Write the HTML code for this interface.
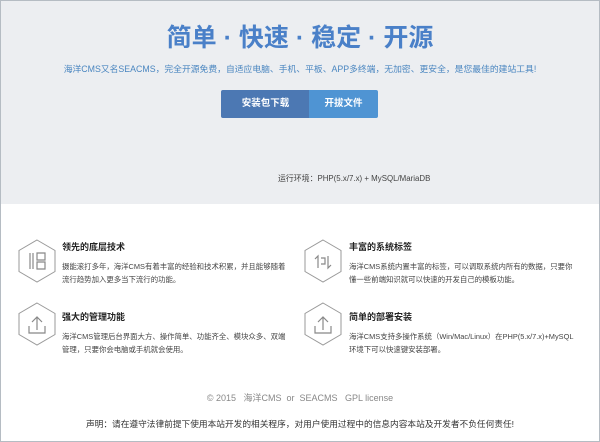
<!DOCTYPE html>
<html><head><meta charset="utf-8"><style>
*{margin:0;padding:0;box-sizing:border-box}
body{width:600px;height:442px;overflow:hidden;font-family:"Liberation Sans","Noto Sans CJK SC",sans-serif;background:#fff;position:relative}
.frame{position:absolute;inset:0;border:1px solid #b5bcc3;pointer-events:none;z-index:5}
.top{position:absolute;left:0;top:0;width:600px;height:204px;background:#eceef1}
.t{position:absolute;left:0;width:600px;text-align:center;white-space:nowrap}
.sub{top:62px;font-size:8.8px;color:#4a86c0}
.b1{position:absolute;left:221px;top:90px;width:89px;height:28px;background:#4c78b3;color:#fff;font-size:9.5px;font-weight:bold;text-align:center;line-height:28px;border-radius:2px 0 0 2px}
.b2{position:absolute;left:309px;top:90px;width:69px;height:28px;background:#4f94d3;color:#fff;font-size:9.5px;font-weight:bold;text-align:center;line-height:28px;border-radius:0 2px 2px 0}
.env{position:absolute;left:278px;top:173px;font-size:7.9px;color:#444;white-space:nowrap}
.f{position:absolute;font-size:7.4px;color:#444;line-height:13px;width:228px}
.f b{display:block;font-size:9px;color:#222;margin-bottom:7px;line-height:12px}
svg{position:absolute}
.foot{font-size:9px;color:#888;top:391px}
.disc{font-size:8.7px;color:#333;top:417px}
</style></head><body>
<div class="top"></div>
<div class="t" style="top:23px;font-size:25px;line-height:30px;color:#4a80c8;font-weight:bold">简单 · 快速 · 稳定 · 开源</div>
<div class="t sub">海洋CMS又名SEACMS，完全开源免费，自适应电脑、手机、平板、APP多终端，无加密、更安全，是您最佳的建站工具!</div>
<div class="b1">安装包下载</div><div class="b2">开拔文件</div>
<div class="env">运行环境：PHP(5.x/7.x) + MySQL/MariaDB</div>

<svg style="left:17px;top:239px" width="40" height="44" viewBox="0 0 40 44"><polygon points="20,1 38,11.5 38,32.5 20,43 2,32.5 2,11.5" fill="none" stroke="#999" stroke-width="1"/><path d="M13 14v16M16 14v16M20 14h8v7h-8zM20 23h8v7h-8z" fill="none" stroke="#888" stroke-width="1.2"/></svg>
<div class="f" style="left:62px;top:241px"><b>领先的底层技术</b>摄能滚打多年，海洋CMS有着丰富的经验和技术积累，并且能够随着流行趋势加入更多当下流行的功能。</div>

<svg style="left:303px;top:239px" width="40" height="44" viewBox="0 0 40 44"><polygon points="20,1 38,11.5 38,32.5 20,43 2,32.5 2,11.5" fill="none" stroke="#999" stroke-width="1"/><path d="M12 20l3-3v12M28 26l-3 3V17M18 19h4v6h-4" fill="none" stroke="#888" stroke-width="1.2"/></svg>
<div class="f" style="left:349px;top:241px"><b>丰富的系统标签</b>海洋CMS系统内置丰富的标签，可以调取系统内所有的数据，只要你懂一些前端知识就可以快速的开发自己的模板功能。</div>

<svg style="left:17px;top:302px" width="40" height="44" viewBox="0 0 40 44"><polygon points="20,1 38,11.5 38,32.5 20,43 2,32.5 2,11.5" fill="none" stroke="#999" stroke-width="1"/><path d="M12 24v7h16v-7M20 28V15M15 20l5-5 5 5" fill="none" stroke="#888" stroke-width="1.2"/></svg>
<div class="f" style="left:62px;top:311px"><b>强大的管理功能</b>海洋CMS管理后台界面大方、操作简单、功能齐全、模块众多、双端管理，只要你会电脑或手机就会使用。</div>

<svg style="left:303px;top:302px" width="40" height="44" viewBox="0 0 40 44"><polygon points="20,1 38,11.5 38,32.5 20,43 2,32.5 2,11.5" fill="none" stroke="#999" stroke-width="1"/><path d="M12 24v7h16v-7M20 28V15M15 20l5-5 5 5" fill="none" stroke="#888" stroke-width="1.2"/></svg>
<div class="f" style="left:349px;top:311px"><b>简单的部署安装</b>海洋CMS支持多操作系统（Win/Mac/Linux）在PHP(5.x/7.x)+MySQL环境下可以快速键安装部署。</div>

<div class="t foot">© 2015 &nbsp; 海洋CMS &nbsp;or &nbsp;SEACMS &nbsp; GPL license</div>
<div class="t disc">声明：请在遵守法律前提下使用本站开发的相关程序，对用户使用过程中的信息内容本站及开发者不负任何责任!</div>
<div class="frame"></div>
</body></html>
